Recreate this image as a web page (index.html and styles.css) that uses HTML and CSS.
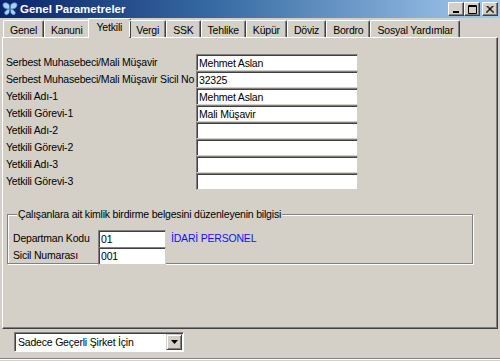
FILE: index.html
```html
<!DOCTYPE html>
<html lang="tr">
<head>
<meta charset="utf-8">
<title>Genel Parametreler</title>
<link rel="stylesheet" href="styles.css">
</head>
<body>
<div class="window">
  <div class="titlebar">
    <svg class="app-icon" width="16" height="14" viewBox="0 0 16 14">
      <path d="M8 4 C6 0 1 0 1 3 C1 6 4 7 7 7 C4 8 2 10 3 12 C4 14 7 12 8 9 C9 12 12 14 13 12 C14 10 12 8 9 7 C12 7 15 6 15 3 C15 0 10 0 8 4 Z" fill="#a8d4f4" stroke="#5b8fc8" stroke-width="0.8"/>
      <rect x="7.4" y="3" width="1.2" height="9" fill="#1c3a78"/>
    </svg>
    <span class="title">Genel Parametreler</span>
    <div class="caption-buttons">
      <span class="cbtn">
        <svg width="8" height="7" viewBox="0 0 8 7"><rect x="1" y="5" width="6" height="2" fill="#000"/></svg>
      </span>
      <span class="cbtn">
        <svg width="9" height="9" viewBox="0 0 9 9"><path d="M0.5 0.5h8v8h-8z M0.5 1.5h8" fill="none" stroke="#000"/></svg>
      </span>
      <span class="cbtn cbtn-close">
        <svg width="8" height="7" viewBox="0 0 8 7"><path d="M0.5 0 L7.5 7 M7.5 0 L0.5 7 M1.5 0 L8 6.5 M6.5 0 L0 6.5" stroke="#000" stroke-width="1" fill="none"/></svg>
      </span>
    </div>
  </div>

  <div class="tabs">
    <span class="tab">Genel</span>
    <span class="tab">Kanuni</span>
    <span class="tab tab-active">Yetkili</span>
    <span class="tab">Vergi</span>
    <span class="tab">SSK</span>
    <span class="tab">Tehlike</span>
    <span class="tab">Küpür</span>
    <span class="tab">Döviz</span>
    <span class="tab">Bordro</span>
    <span class="tab">Sosyal Yardımlar</span>
  </div>

  <div class="panel">
    <div class="form">
      <label>Serbest Muhasebeci/Mali Müşavir</label>
      <div class="field">Mehmet Aslan</div>
      <label>Serbest Muhasebeci/Mali Müşavir Sicil No</label>
      <div class="field">32325</div>
      <label>Yetkili Adı-1</label>
      <div class="field">Mehmet Aslan</div>
      <label>Yetkili Görevi-1</label>
      <div class="field">Mali Müşavir</div>
      <label>Yetkili Adı-2</label>
      <div class="field"></div>
      <label>Yetkili Görevi-2</label>
      <div class="field"></div>
      <label>Yetkili Adı-3</label>
      <div class="field"></div>
      <label>Yetkili Görevi-3</label>
      <div class="field"></div>
    </div>

    <fieldset class="group">
      <legend>Çalışanlara ait kimlik birdirme belgesini düzenleyenin bilgisi</legend>
      <div class="group-row">
        <label>Departman Kodu</label>
        <div class="field field-short">01</div>
        <span class="dept-name">İDARİ PERSONEL</span>
      </div>
      <div class="group-row">
        <label>Sicil Numarası</label>
        <div class="field field-short">001</div>
      </div>
    </fieldset>
  </div>

  <div class="footer">
    <div class="combo">
      <span class="combo-text">Sadece Geçerli Şirket İçin</span>
      <span class="combo-btn">
        <svg width="7" height="4" viewBox="0 0 7 4"><path d="M0 0h7L3.5 4z" fill="#000"/></svg>
      </span>
    </div>
  </div>
  <div class="statusline"></div>
</div>
</body>
</html>
```

FILE: styles.css
```css
body {
  margin: 0;
  background: #d4d0c8;
  font: normal 10.5px/13px "Liberation Sans", Arial, sans-serif;
  letter-spacing: -0.2px;
  color: #000;
}

.window {
  width: 500px;
  height: 361px;
  overflow: hidden;
}

.titlebar {
  display: flex;
  align-items: center;
  height: 18px;
  background: linear-gradient(to right, #0a246a 0%, #3a6ea5 45%, #a6caf0 100%);
  padding-left: 2px;
}

.app-icon {
  margin-right: 2px;
}

.title {
  color: #fff;
  font-weight: bold;
  font-size: 11.5px;
  letter-spacing: 0;
  flex: 1;
}

.caption-buttons {
  display: flex;
  margin-right: 2px;
}

.cbtn {
  display: flex;
  align-items: center;
  justify-content: center;
  width: 14px;
  height: 12px;
  background: #d4d0c8;
  border-top: 1px solid #fff;
  border-left: 1px solid #fff;
  border-right: 1px solid #404040;
  border-bottom: 1px solid #404040;
  box-shadow: inset -1px -1px #808080;
}

.cbtn-close {
  margin-left: 2px;
}

.tabs {
  display: flex;
  align-items: flex-end;
  height: 19px;
  padding-left: 3px;
  position: relative;
  z-index: 1;
}

.tab {
  height: 16px;
  line-height: 18px;
  padding: 0 6px;
  border-top: 1px solid #fff;
  border-left: 1px solid #fff;
  border-right: 1px solid #404040;
  box-shadow: inset -1px 0 #808080;
  border-radius: 2px 2px 0 0;
  white-space: nowrap;
}

.tab-active {
  height: 19px;
  line-height: 17px;
  margin: 0 -2px -1px;
  padding: 0 8px;
  background: #d4d0c8;
}

.panel {
  height: 290px;
  margin: 0 2px;
  border-top: 1px solid #fff;
  border-left: 1px solid #fff;
  border-right: 1px solid #404040;
  border-bottom: 1px solid #404040;
  box-shadow: inset -1px -1px #808080;
}

.form {
  display: grid;
  grid-template-columns: 190px 162px;
  grid-auto-rows: 17px;
  padding: 16px 0 0 3px;
  align-items: center;
}

.field {
  box-sizing: border-box;
  height: 17px;
  padding: 2px 2px 0;
  background: #fff;
  border-top: 1px solid #808080;
  border-left: 1px solid #808080;
  border-right: 1px solid #d4d0c8;
  border-bottom: 1px solid #d4d0c8;
  box-shadow: inset 1px 1px #404040;
  white-space: nowrap;
}

.group {
  margin: 18px 0 0 4px;
  width: 466px;
  height: 56px;
  box-sizing: border-box;
  padding: 9px 0 0 5px;
  border: 1px solid #808080;
  box-shadow: inset 1px 1px #fff, 1px 1px #fff;
}

.group legend {
  padding: 0 1px;
  margin-left: 4px;
  background: #d4d0c8;
}

.group-row {
  display: flex;
  align-items: center;
  height: 17px;
}

.group-row label {
  width: 85px;
}

.field-short {
  width: 68px;
  height: 18px;
}

.dept-name {
  color: #1010ff;
  margin-left: 5px;
}

.footer {
  height: 29px;
  padding: 3px 0 0 14px;
  box-sizing: border-box;
}

.combo {
  display: flex;
  align-items: center;
  box-sizing: border-box;
  width: 170px;
  height: 20px;
  background: #fff;
  border-top: 1px solid #808080;
  border-left: 1px solid #808080;
  border-right: 1px solid #fff;
  border-bottom: 1px solid #fff;
  box-shadow: inset 1px 1px #404040;
  padding: 0 1px 0 3px;
}

.combo-text {
  flex: 1;
  white-space: nowrap;
}

.combo-btn {
  display: flex;
  align-items: center;
  justify-content: center;
  width: 14px;
  height: 14px;
  background: #d4d0c8;
  border-top: 1px solid #d4d0c8;
  border-left: 1px solid #d4d0c8;
  border-right: 1px solid #404040;
  border-bottom: 1px solid #404040;
  box-shadow: inset 1px 1px #fff, inset -1px -1px #808080;
}

.statusline {
  border-top: 1px solid #808080;
  border-bottom: 1px solid #fff;
}
```
